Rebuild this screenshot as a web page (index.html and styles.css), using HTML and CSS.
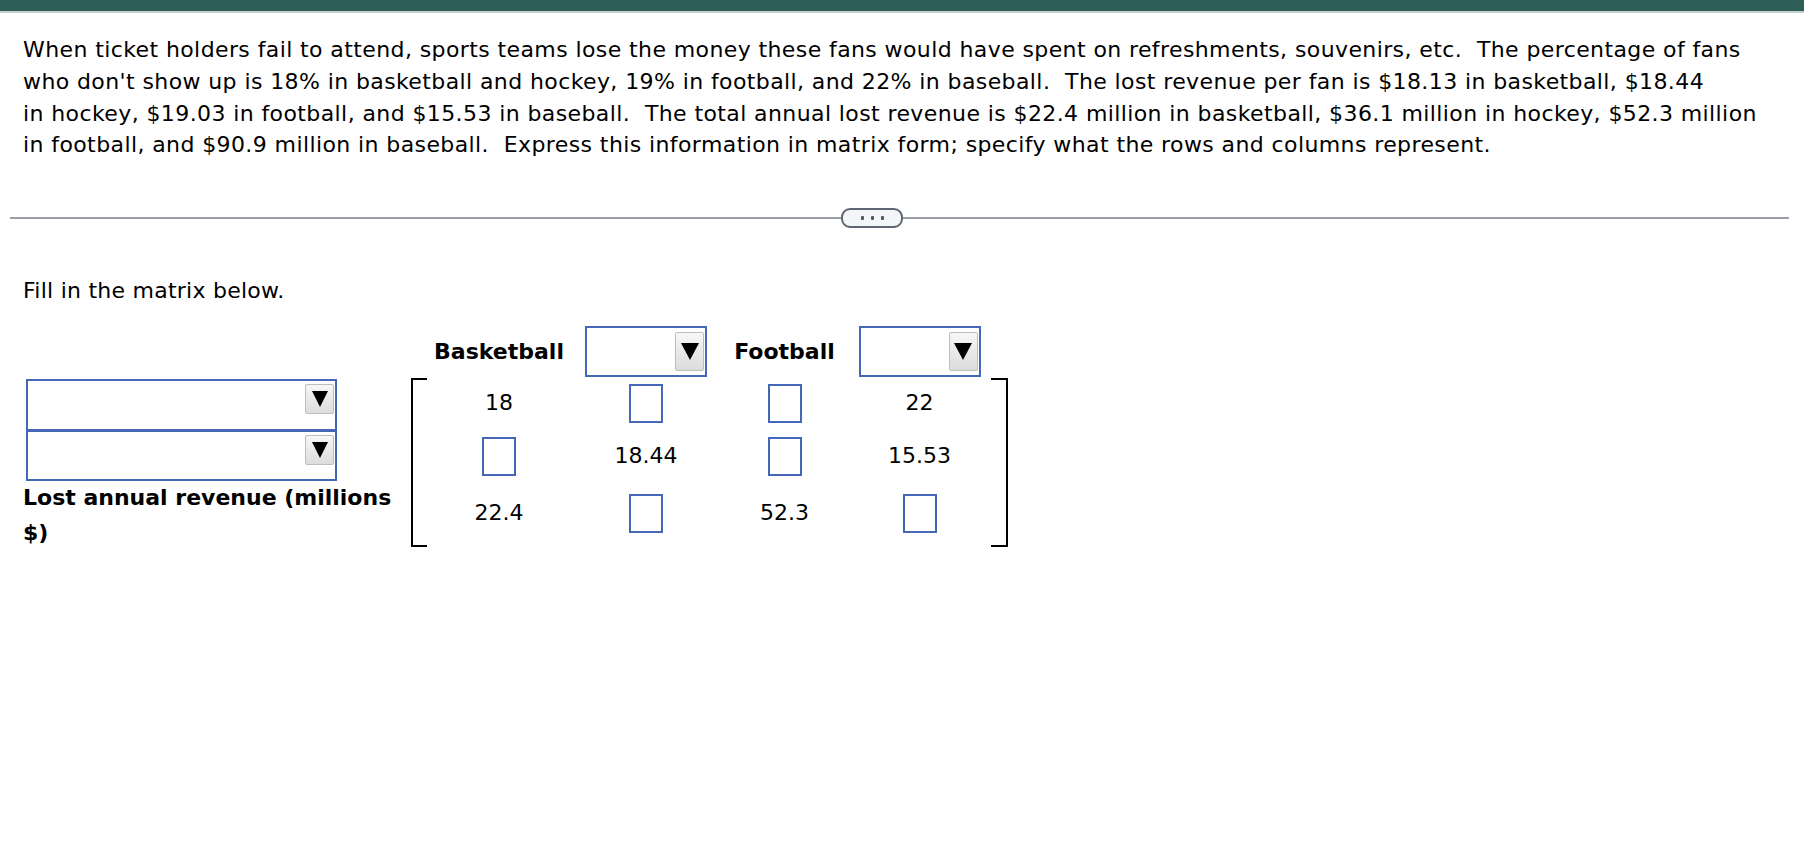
FILE: index.html
```html
<!DOCTYPE html>
<html lang="en">
<head>
<meta charset="utf-8">
<title>Matrix question</title>
<link rel="stylesheet" href="styles.css">
</head>
<body>
<div class="topbar"></div>
<main class="page">
  <p class="question">When ticket holders fail to attend, sports teams lose the money these fans would have spent on refreshments, souvenirs, etc.&nbsp; The percentage of fans<br>who don't show up is 18% in basketball and hockey, 19% in football, and 22% in baseball.&nbsp; The lost revenue per fan is $18.13 in basketball, $18.44<br>in hockey, $19.03 in football, and $15.53 in baseball.&nbsp; The total annual lost revenue is $22.4 million in basketball, $36.1 million in hockey, $52.3 million<br>in football, and $90.9 million in baseball.&nbsp; Express this information in matrix form; specify what the rows and columns represent.</p>

  <div class="divider">
    <span class="rule rule-left"></span>
    <span class="pill"><i></i><i></i><i></i></span>
    <span class="rule rule-right"></span>
  </div>

  <p class="prompt">Fill in the matrix below.</p>

  <div class="matrix">
    <!-- header row -->
    <div class="cell head c1">Basketball</div>
    <div class="cell c2 head-select"><div class="select select-head"><span class="btn"><b class="tri"></b></span></div></div>
    <div class="cell head c3">Football</div>
    <div class="cell c4 head-select"><div class="select select-head"><span class="btn"><b class="tri"></b></span></div></div>

    <div class="bracket bracket-left"></div>
    <div class="bracket bracket-right"></div>

    <!-- row 1 -->
    <div class="label r1"><div class="select select-row first"><span class="btn"><b class="tri"></b></span></div></div>
    <div class="cell r1 c1">18</div>
    <div class="cell r1 c2"><span class="box"></span></div>
    <div class="cell r1 c3"><span class="box"></span></div>
    <div class="cell r1 c4">22</div>

    <!-- row 2 -->
    <div class="label r2"><div class="select select-row second"><span class="btn"><b class="tri"></b></span></div></div>
    <div class="cell r2 c1"><span class="box"></span></div>
    <div class="cell r2 c2">18.44</div>
    <div class="cell r2 c3"><span class="box"></span></div>
    <div class="cell r2 c4">15.53</div>

    <!-- row 3 -->
    <div class="label r3 label-text">Lost annual revenue (millions $)</div>
    <div class="cell r3 c1">22.4</div>
    <div class="cell r3 c2"><span class="box"></span></div>
    <div class="cell r3 c3">52.3</div>
    <div class="cell r3 c4"><span class="box"></span></div>
  </div>
</main>
</body>
</html>
```

FILE: styles.css
```css
html, body {
  margin: 0;
  padding: 0;
  background: #ffffff;
}

body {
  font-family: "DejaVu Sans", "Liberation Sans", Arial, sans-serif;
  font-size: 22px;
  color: #000;
}

.topbar {
  height: 11px;
  background: #2d5f58;
  border-bottom: 2px solid #c3cfcd;
}

.page {
  padding: 0 15px 0 23px;
}

.question {
  margin: 21px 0 0;
  line-height: 31.8px;
  letter-spacing: 0.4px;
  white-space: nowrap;
}

.divider {
  margin: 47px 0 0 -13px;
  height: 20px;
  display: flex;
  align-items: center;
}

.rule {
  height: 2px;
  background: #9a9ca7;
}

.rule-left {
  width: 831px;
  flex: none;
}

.rule-right {
  flex: 1;
}

.pill {
  box-sizing: border-box;
  width: 62px;
  height: 20px;
  border: 2px solid #5e6573;
  border-radius: 9px;
  background: #f3f5f9;
  display: flex;
  align-items: center;
  justify-content: center;
  gap: 7px;
}

.pill i {
  display: block;
  width: 3px;
  height: 4px;
  border-radius: 1px;
  background: #4f5665;
}

.prompt {
  margin: 47px 0 0;
  line-height: 31.8px;
  letter-spacing: 0.25px;
}

.matrix {
  margin-top: 19px;
  display: grid;
  grid-template-columns: 388px 16px 144px 150px 127px 143px 17px;
  grid-template-rows: 52px 51px 55px 63px;
}

.cell {
  display: flex;
  align-items: center;
  justify-content: center;
  line-height: 26px;
}

.head {
  grid-row: 1;
  font-weight: bold;
}

.head-select {
  grid-row: 1;
  align-items: flex-start;
}

.c1 { grid-column: 3; }
.c2 { grid-column: 4; }
.c3 { grid-column: 5; }
.c4 { grid-column: 6; }

.r1 { grid-row: 2; }
.r2 { grid-row: 3; }
.r3 { grid-row: 4; }

.cell.r3 {
  padding-bottom: 4px;
}

.label {
  grid-column: 1;
}

.label-text {
  align-self: center;
  font-weight: bold;
  line-height: 35px;
}

.bracket {
  grid-row: 2 / 5;
  border: 2px solid #000;
}

.bracket-left {
  grid-column: 2;
  border-right: none;
}

.bracket-right {
  grid-column: 7;
  border-left: none;
}

.box {
  box-sizing: border-box;
  display: block;
  width: 34px;
  height: 39px;
  border: 2px solid #4467b8;
  background: #fff;
}

.select {
  box-sizing: border-box;
  border: 2px solid #4467b8;
  background: #fff;
  display: flex;
  justify-content: flex-end;
  align-items: flex-start;
}

.select-head {
  width: 122px;
  height: 51px;
  padding: 4px 1px 0 0;
}

.select-head .btn {
  height: 39px;
}

.select-head .tri {
  border-left-width: 9px;
  border-right-width: 9px;
  border-top-width: 17px;
}

.select-row {
  width: 311px;
  margin-left: 3px;
  padding: 3px 1px 0 0;
}

.select-row.first {
  height: 52px;
  margin-top: 1px;
}

.select-row.second {
  height: 51px;
  margin-top: 1px;
  position: relative;
}

.btn {
  box-sizing: border-box;
  width: 29px;
  height: 30px;
  border: 1px solid #bdbdbd;
  border-radius: 2px;
  background: linear-gradient(#f7f7f7, #dcdcdc);
  display: flex;
  align-items: center;
  justify-content: center;
}

.tri {
  display: block;
  width: 0;
  height: 0;
  border-left: 8px solid transparent;
  border-right: 8px solid transparent;
  border-top: 16px solid #000;
}
```
